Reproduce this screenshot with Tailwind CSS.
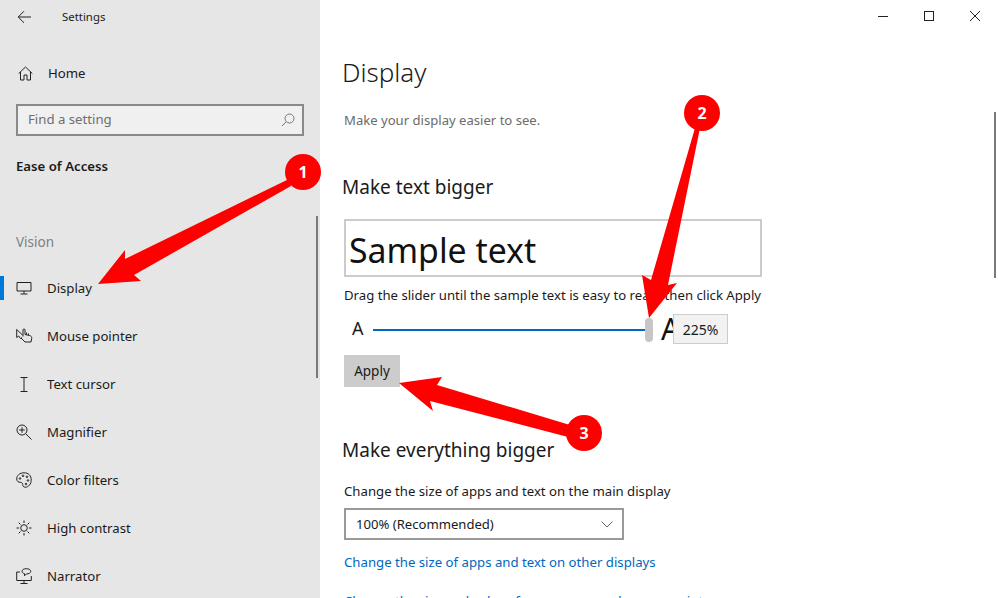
<!doctype html>
<html><head><meta charset="utf-8"><script src="https://cdn.jsdelivr.net/npm/@tailwindcss/browser@4"></script></head>
<body class="m-0 bg-white">
<div class="relative flex w-[998px] h-[598px] overflow-hidden bg-white text-[13.2px] text-[#1a1a1a] font-['Noto_Sans','Open_Sans',sans-serif]">
  <aside class="relative w-[320px] shrink-0 bg-[#e6e6e6]">
    <div class="h-[34px] flex items-center">
      <svg class="ml-[17px] w-[15px] h-[14px]" viewBox="0 0 15 14" fill="none" stroke="#222" stroke-width="1"><path d="M14 7H1.5M7 1.2 1.2 7 7 12.8"/></svg>
      <span class="ml-[30px] text-[11.4px]">Settings</span>
    </div>
    <div class="mt-[15px] h-[48px] flex items-center pl-[18px]">
      <svg class="w-[15px] h-[15px]" viewBox="0 0 15 15" fill="none" stroke="#222" stroke-width="1"><path d="M.7 7.5 7.5 1l6.8 6.5M2.5 6v8h3.5V9h3v5h3.5V6"/></svg>
      <span class="ml-[15px] pt-[2px]">Home</span>
    </div>
    <div class="ml-[16px] mt-[7px] w-[288px] h-[32px] border-2 border-[#8a8a8a] bg-[#f0f0f0] flex items-center justify-between pl-[10px] pr-[7px] text-[#6e6e6e]">
      <span>Find a setting</span>
      <svg class="w-[14px] h-[14px]" viewBox="0 0 14 14" fill="none" stroke="#777" stroke-width="1"><circle cx="8.5" cy="5.5" r="4.5"/><path d="M5.2 8.8 1 13"/></svg>
    </div>
    <div class="ml-[16px] mt-[19px] h-[22px] leading-[22px] font-semibold text-[#1a1a1a]">Ease of Access</div>
    <div class="ml-[16px] mt-[54px] h-[22px] leading-[22px] text-[13.5px] text-[#808080]">Vision</div>
    <nav class="mt-[11px] flex flex-col">
      <div class="relative h-[48px] shrink-0 flex items-center pl-[16px]"><span class="absolute left-0 top-[12px] w-[4px] h-[24px] bg-[#0078d7]"></span>
        <svg class="w-[16px] h-[14px]" viewBox="0 0 16 14" fill="none" stroke="#222" stroke-width="1"><path d="M1 1.500h14v8.500H1zM8 10v3M4.500 13h7"/></svg><span class="ml-[15px] pt-[2px]">Display</span></div>
      <div class="h-[48px] shrink-0 flex items-center pl-[16px]">
        <svg class="w-[17px] h-[16px]" viewBox="0 0 17 16" fill="none" stroke="#222" stroke-width="1"><path d="M.7 1.500v8l2-1.500L4.500 10.500 6 9.500M.7 1.500 6.500 7M7 8.500V2a1 1 0 0 1 2 0v4.500l4.500 1c1.800.5 2.500 1.500 2.200 3l-.7 3.500H9L5 10"/><path d="M10.500 6.500V4.500M12.500 7V5.500"/></svg><span class="ml-[14px] pt-[2px]">Mouse pointer</span></div>
      <div class="h-[48px] shrink-0 flex items-center pl-[16px]">
        <svg class="w-[16px] h-[15px]" viewBox="0 0 16 15" fill="none" stroke="#222" stroke-width="1"><path d="M4.500.5h7M8 .5v14M4.500 14.500h7"/></svg><span class="ml-[15px] pt-[2px]">Text cursor</span></div>
      <div class="h-[48px] shrink-0 flex items-center pl-[16px]">
        <svg class="w-[16px] h-[16px]" viewBox="0 0 16 16" fill="none" stroke="#222" stroke-width="1"><circle cx="6" cy="6" r="5"/><path d="M6 3.200v5.600M3.200 6h5.600M9.700 9.700 15.500 15.500"/></svg><span class="ml-[15px] pt-[2px]">Magnifier</span></div>
      <div class="h-[48px] shrink-0 flex items-center pl-[16px]">
        <svg class="w-[16px] h-[16px]" viewBox="0 0 16 16" fill="none" stroke="#222" stroke-width="1"><path d="M8 .8C3.500.8.700 3.500.700 7c0 2.500 2 3.300 3.500 3.300 1.500 0 2.500.8 2.500 2.200 0 1.800 1 2.700 2.500 2.700 3.500 0 6-3.300 6-7C15.300 3.500 12.500.8 8 .8Z"/><circle cx="4" cy="6.500" r=".8"/><circle cx="7" cy="3.800" r=".8"/><circle cx="11" cy="4.800" r=".8"/><circle cx="12" cy="8.500" r=".8"/><circle cx="10" cy="12" r=".8"/></svg><span class="ml-[15px] pt-[2px]">Color filters</span></div>
      <div class="h-[48px] shrink-0 flex items-center pl-[16px]">
        <svg class="w-[16px] h-[16px]" viewBox="0 0 16 16" fill="none" stroke="#222" stroke-width="1"><circle cx="8" cy="8" r="3.300"/><path d="M8 .5v2.500M8 13v2.500M.5 8H3M13 8h2.500M2.700 2.700l1.800 1.800M11.500 11.500l1.800 1.800M2.700 13.300l1.800-1.800M11.500 4.500l1.800-1.800"/></svg><span class="ml-[15px] pt-[2px]">High contrast</span></div>
      <div class="h-[48px] shrink-0 flex items-center pl-[16px]">
        <svg class="w-[16px] h-[16px]" viewBox="0 0 16 16" fill="none" stroke="#222" stroke-width="1"><path d="M4 4H.7v8.500h14.600V8M8 12.500v3M4.500 15.500h7"/><path d="M6 3.300C6 1.800 7.800.7 10.300.7s4.500 1.100 4.500 2.600-2 2.700-4.500 2.700l-1.800 1.800V5.700C7 5.300 6 4.500 6 3.300Z"/></svg><span class="ml-[15px] pt-[2px]">Narrator</span></div>
    </nav>
    <div class="absolute left-[316px] top-[216px] w-[2px] h-[162px] bg-[#7a7a7a]"></div>
  </aside>

  <main class="relative flex-1">
    <div class="flex justify-end h-[32px]">
      <div class="w-[46px] flex items-center justify-center"><span class="w-[10px] h-px bg-[#222]"></span></div>
      <div class="w-[46px] flex items-center justify-center"><span class="w-[10px] h-[10px] border border-[#222]"></span></div>
      <div class="w-[46px] flex items-center justify-center"><svg class="w-[10px] h-[10px]" viewBox="0 0 10 10" fill="none" stroke="#222" stroke-width="1"><path d="M0 0l10 10M10 0 0 10"/></svg></div>
    </div>
    <div class="pl-[22px] pt-[17px]">
      <h1 class="text-[26px] leading-[46px] font-light text-[#1a1a1a] h-[46px]">Display</h1>
      <p class="ml-[2px] mt-[14px] leading-[22px] text-[#6b6b6b] text-[13.1px]">Make your display easier to see.</p>
      <h2 class="mt-[43px] text-[19px] leading-[26px]">Make text bigger</h2>
      <div class="ml-[2px] mt-[19px] w-[418px] h-[58px] border-2 border-[#cccccc] pl-[3px] text-[33.8px] leading-[58px] text-[#111]">Sample text</div>
      <p class="ml-[2px] mt-[7px] leading-[22px] text-[13.16px] whitespace-nowrap">Drag the slider until the sample text is easy to read, then click Apply</p>
      <div class="relative ml-[2px] mt-[8px] h-[32px] w-[420px]">
        <span class="absolute left-[8px] top-[1px] text-[18px] leading-[26px]">A</span>
        <span class="absolute left-[29px] top-[15px] w-[274px] h-[2px] bg-[#0067c0]"></span>
        <span class="absolute left-[301px] top-[4px] w-[8px] h-[24px] rounded-[4px] bg-[#c6c6c6]"></span>
        <span class="absolute left-[317px] top-[-4px] text-[30px] leading-[38px] text-[#111]">A</span>
        <span class="absolute left-[329px] top-0 w-[55px] h-[30px] border border-[#cccccc] bg-[#f2f2f2] flex items-center justify-center text-[14px]">225%</span>
      </div>
      <button class="block ml-[2px] mt-[9px] w-[56px] h-[32px] bg-[#cccccc] text-[13.5px]">Apply</button>
      <h2 class="mt-[50px] text-[19px] leading-[26px]">Make everything bigger</h2>
      <p class="ml-[2px] mt-[17px] leading-[22px] text-[13.2px] whitespace-nowrap">Change the size of apps and text on the main display</p>
      <div class="ml-[2px] mt-[6px] w-[280px] h-[32px] border-2 border-[#999999] flex items-center justify-between pl-[10px] pr-[9px] text-[13.1px]">
        <span class="pt-[2px]">100% (Recommended)</span>
        <svg class="w-[12px] h-[7px]" viewBox="0 0 12 7" fill="none" stroke="#666" stroke-width="1"><path d="M.5.500 6 6l5.500-5.500"/></svg>
      </div>
      <a class="block ml-[2px] mt-[11px] leading-[22px] text-[13.2px] text-[#0067c0] whitespace-nowrap">Change the size of apps and text on other displays</a>
      <a class="block ml-[2px] mt-[17px] leading-[22px] text-[13.2px] text-[#0067c0] whitespace-nowrap">Change the size and color of your cursor and mouse pointer</a>
    </div>
    <div class="absolute left-[674px] top-[112px] w-[2px] h-[166px] bg-[#7a7a7a]"></div>
  </main>

  <svg class="absolute inset-0 w-[998px] h-[598px] pointer-events-none" viewBox="0 0 998 598" fill="#ff0000">
    <polygon points="289,179 125,259 125,250 98,284 141,281 134,275 291,186"/>
    <polygon points="695,128 700,128 668,285 677,283 649,318 642,275 651,280"/>
    <polygon points="570,425 437,385 442,377 399,383 433,411 430,401 568,437"/>
  </svg>
  <span class="absolute left-[285px] top-[154px] w-[36px] h-[36px] rounded-full bg-[#ff0000] text-white font-bold text-[16px] flex items-center justify-center">1</span>
  <span class="absolute left-[684px] top-[95px] w-[36px] h-[36px] rounded-full bg-[#ff0000] text-white font-bold text-[16px] flex items-center justify-center">2</span>
  <span class="absolute left-[566px] top-[415px] w-[36px] h-[36px] rounded-full bg-[#ff0000] text-white font-bold text-[16px] flex items-center justify-center">3</span>
</div>
</body></html>
